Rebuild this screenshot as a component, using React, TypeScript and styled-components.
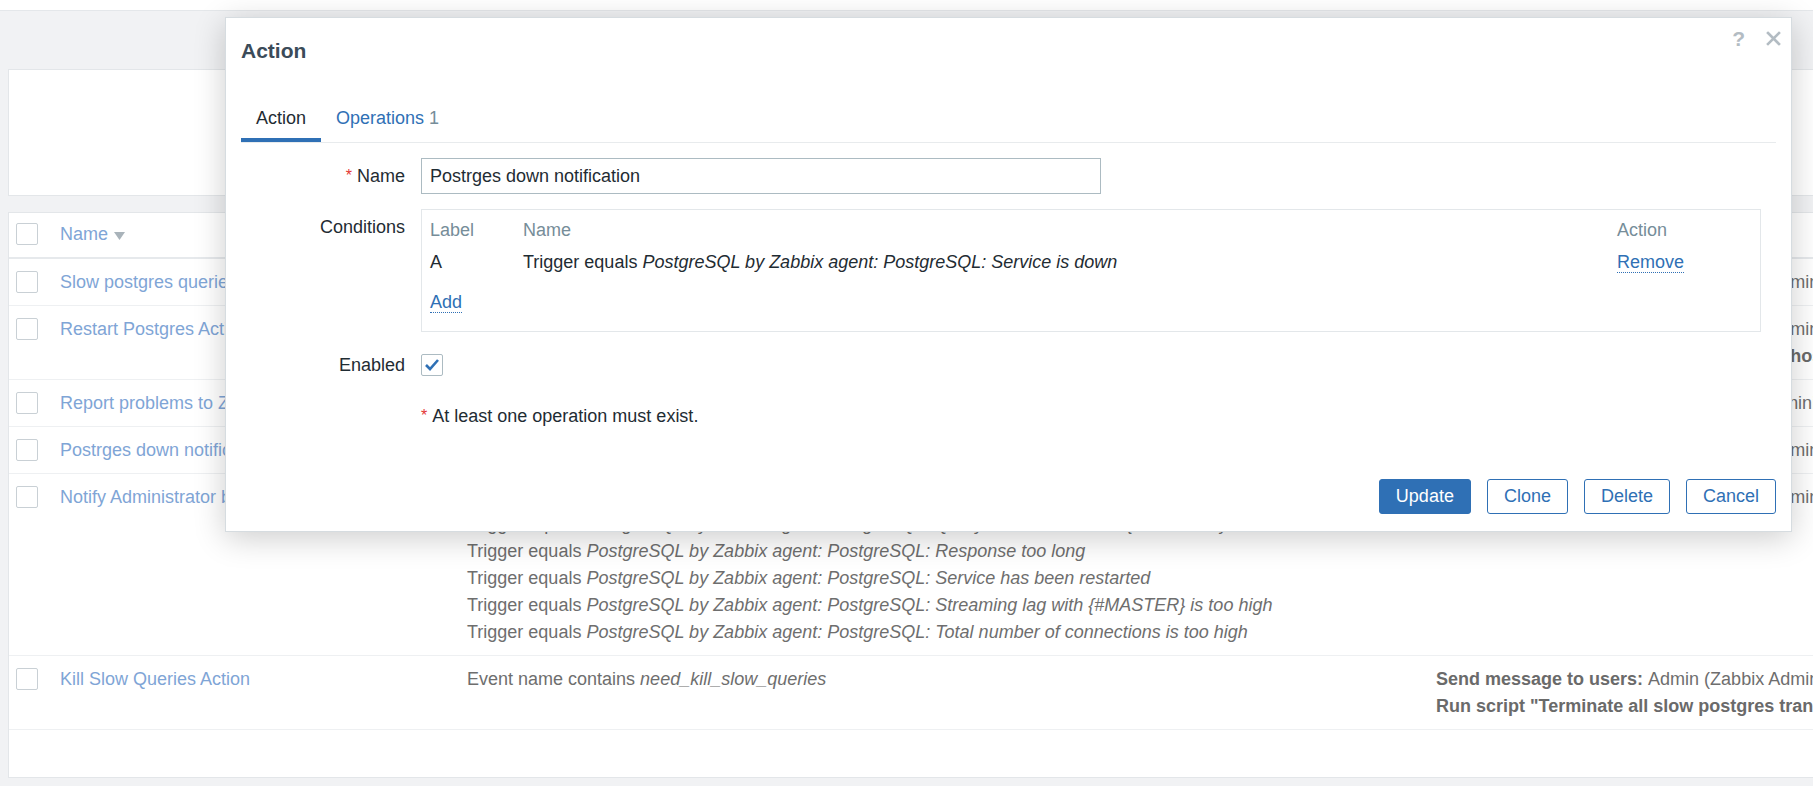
import { createGlobalStyle, styled } from "styled-components"

const GlobalStyle = createGlobalStyle`
  html, body {
    margin: 0;
    padding: 0;
  }
  body {
    width: 1813px;
    height: 786px;
    overflow: hidden;
    background: #f1f2f4;
    font-family: "Liberation Sans", Arial, sans-serif;
    font-size: 18px;
    color: #1f2c33;
  }
  * {
    box-sizing: border-box;
  }
`

const Page = styled.div`
  position: relative;
  width: 1813px;
  height: 786px;
  overflow: hidden;
`

const TopBar = styled.div`
  height: 11px;
  background: #fff;
  border-bottom: 1px solid #e4e7ea;
`

const Content = styled.div`
  padding: 58px 0 0 8px;
`

const FilterBox = styled.div`
  width: 1900px;
  height: 127px;
  background: #fff;
  border: 1px solid #e3e6e9;
`

const ListTable = styled.div`
  width: 1900px;
  margin-top: 16px;
  background: #fff;
  border: 1px solid #e3e6e9;
  color: #6e6e6e;
  line-height: 27px;
`

const Row = styled.div<{ $head?: boolean }>`
  display: grid;
  grid-template-columns: 51px 407px 969px 1fr;
  padding: ${p => (p.$head ? "8px 0 9px" : "10px 0 9px")};
  border-bottom: ${p => (p.$head ? "2px solid #e6e9ec" : "1px solid #eef0f2")};
`

const Cell = styled.div`
  white-space: nowrap;
`

const CheckCell = styled.div`
  padding-left: 7px;
`

const FadedBox = styled.div`
  width: 22px;
  height: 22px;
  margin-top: 2px;
  border: 1px solid #c9d0d5;
  border-radius: 2px;
  background: #fff;
`

const FadedLink = styled.span`
  color: #7fa5d6;
`

const SortArrow = styled.svg`
  margin-left: 6px;
  vertical-align: 0;
`

const Ops = styled.b`
  font-weight: bold;
  color: #6a6a6a;
`

const TableFooter = styled.div`
  height: 47px;
`

const Dialog = styled.div`
  position: absolute;
  left: 225px;
  top: 17px;
  width: 1567px;
  background: #fff;
  border: 1px solid #d6dce0;
  box-shadow: 0 6px 30px rgba(0, 0, 0, 0.2);
  padding: 0 15px 17px 15px;
`

const DialogHeader = styled.div`
  position: relative;
  padding-top: 20px;
`

const Title = styled.h4`
  margin: 0;
  font-size: 21px;
  line-height: 26px;
  font-weight: bold;
  color: #3b4b59;
`

const HeaderIcons = styled.div`
  position: absolute;
  top: 12px;
  right: -5px;
  display: flex;
  align-items: center;
  gap: 21px;
  height: 17px;
`

const HelpIcon = styled.span`
  font-size: 21px;
  line-height: 17px;
  font-weight: bold;
  color: #b3bcc3;
`

const TabList = styled.div`
  display: flex;
  margin-top: 41px;
  border-bottom: 1px solid #e8ebed;
`

const Tab = styled.div<{ $active?: boolean }>`
  padding: 0 15px 6px;
  line-height: 27px;
  border-bottom: 4px solid ${p => (p.$active ? "#2f70b5" : "transparent")};
  color: ${p => (p.$active ? "#1f2c33" : "#2f70b5")};
`

const TabCount = styled.span`
  color: #768d99;
  margin-left: 5px;
`

const Form = styled.div`
  display: grid;
  grid-template-columns: 180px 1fr;
  row-gap: 15px;
  margin-top: 15px;
  padding-right: 15px;
`

const Label = styled.div`
  text-align: right;
  padding-right: 16px;
  line-height: 36px;
  color: #1f2c33;
`

const Required = styled.span`
  color: #e33734;
  font-size: 16px;
  margin-right: 5px;
  vertical-align: 1px;
`

const Field = styled.div`
  min-height: 36px;
  display: flex;
  align-items: center;
`

const TextInput = styled.input`
  width: 680px;
  height: 36px;
  border: 1px solid #acbbc2;
  border-radius: 0;
  padding: 0 8px;
  font-family: inherit;
  font-size: 18px;
  color: #1f2c33;
  outline: none;
`

const ConditionsBox = styled.div`
  width: 100%;
  border: 1px solid #e3e7ea;
  padding: 7px 8px 15px;
  line-height: 27px;
`

const CondGrid = styled.div<{ $gap?: number }>`
  display: grid;
  grid-template-columns: 93px 1fr 135px;
  margin-top: ${p => p.$gap ?? 0}px;
`

const CondHead = styled.div`
  color: #768d99;
`

const DottedLink = styled.span`
  color: #2f70b5;
  border-bottom: 1px dotted #2f70b5;
`

const CheckBox = styled.span`
  display: inline-flex;
  align-items: center;
  justify-content: center;
  width: 22px;
  height: 22px;
  border: 1px solid #acbbc2;
  border-radius: 2px;
  background: #fff;
`

const Note = styled.div`
  line-height: 36px;
  color: #1f2c33;
`

const Footer = styled.div`
  display: flex;
  justify-content: flex-end;
  gap: 16px;
  margin-top: 45px;
`

const Button = styled.button<{ $primary?: boolean }>`
  height: 35px;
  padding: 0 16px;
  border-radius: 3px;
  border: 1px solid #2f70b5;
  background: ${p => (p.$primary ? "#2f70b5" : "#fff")};
  color: ${p => (p.$primary ? "#fff" : "#2f70b5")};
  font-family: inherit;
  font-size: 18px;
  cursor: pointer;
`

const trig = "PostgreSQL by Zabbix agent: PostgreSQL: "

type ActionRow = {
  name: string
  conditions: { pre: string; it: string }[]
  ops: { b: string; t?: string }[]
}

const rows: ActionRow[] = [
  {
    name: "Slow postgres queries notification",
    conditions: [{ pre: "Trigger equals ", it: trig + "Too many slow queries" }],
    ops: [{ b: "Send message to users: ", t: "Admin (Zabbix Administrator) via all media" }],
  },
  {
    name: "Restart Postgres Action",
    conditions: [{ pre: "Trigger equals ", it: trig + "Service is down" }],
    ops: [
      { b: "Send message to users: ", t: "Admin (Zabbix Administrator) via all media" },
      { b: 'Run script "Restart Postgres" on current host' },
    ],
  },
  {
    name: "Report problems to Zabbix administrators",
    conditions: [],
    ops: [{ b: "Send message to user groups: ", t: "Zabbix administrators via all media" }],
  },
  {
    name: "Postrges down notification",
    conditions: [{ pre: "Trigger equals ", it: trig + "Service is down" }],
    ops: [{ b: "Send message to users: ", t: "Admin (Zabbix Administrator) via all media" }],
  },
  {
    name: "Notify Administrator by email",
    conditions: [
      { pre: "Trigger equals ", it: trig + "Cache hit ratio too low" },
      { pre: "Trigger equals ", it: trig + "Query execution for DB {#DBNAME} is too slow" },
      { pre: "Trigger equals ", it: trig + "Response too long" },
      { pre: "Trigger equals ", it: trig + "Service has been restarted" },
      { pre: "Trigger equals ", it: trig + "Streaming lag with {#MASTER} is too high" },
      { pre: "Trigger equals ", it: trig + "Total number of connections is too high" },
    ],
    ops: [{ b: "Send message to users: ", t: "Admin (Zabbix Administrator) via all media" }],
  },
  {
    name: "Kill Slow Queries Action",
    conditions: [{ pre: "Event name contains ", it: "need_kill_slow_queries" }],
    ops: [
      { b: "Send message to users: ", t: "Admin (Zabbix Administrator) via all media" },
      { b: 'Run script "Terminate all slow postgres transactions" on current host' },
    ],
  },
]

const CloseIcon = () => (
  <svg width="15" height="15" viewBox="0 0 15 15">
    <path d="M2 2 L13 13 M13 2 L2 13" stroke="#b3bcc3" strokeWidth="2.6" strokeLinecap="square" />
  </svg>
)

const Tick = () => (
  <svg width="16" height="14" viewBox="0 0 16 14">
    <polyline points="2,7 6,11 14,2" fill="none" stroke="#2f70b5" strokeWidth="2.6" />
  </svg>
)

export default function App() {
  return (
    <Page>
      <GlobalStyle />
      <TopBar />
      <Content>
        <FilterBox />
        <ListTable>
          <Row $head>
            <CheckCell>
              <FadedBox />
            </CheckCell>
            <Cell>
              <FadedLink>Name</FadedLink>
              <SortArrow width="11" height="8" viewBox="0 0 11 8">
                <polygon points="0,0 11,0 5.5,8" fill="#a9b3ba" />
              </SortArrow>
            </Cell>
            <Cell>
              <FadedLink>Conditions</FadedLink>
            </Cell>
            <Cell>Operations</Cell>
          </Row>
          {rows.map(r => (
            <Row key={r.name}>
              <CheckCell>
                <FadedBox />
              </CheckCell>
              <Cell>
                <FadedLink>{r.name}</FadedLink>
              </Cell>
              <Cell>
                {r.conditions.map((c, i) => (
                  <div key={i}>
                    {c.pre}
                    <i>{c.it}</i>
                  </div>
                ))}
              </Cell>
              <Cell>
                {r.ops.map((o, i) => (
                  <div key={i}>
                    <Ops>{o.b}</Ops>
                    {o.t}
                  </div>
                ))}
              </Cell>
            </Row>
          ))}
          <TableFooter />
        </ListTable>
      </Content>

      <Dialog>
        <DialogHeader>
          <Title>Action</Title>
          <HeaderIcons>
            <HelpIcon>?</HelpIcon>
            <CloseIcon />
          </HeaderIcons>
        </DialogHeader>

        <TabList>
          <Tab $active>Action</Tab>
          <Tab>
            Operations<TabCount>1</TabCount>
          </Tab>
        </TabList>

        <Form>
          <Label>
            <Required>*</Required>Name
          </Label>
          <Field>
            <TextInput defaultValue="Postrges down notification" />
          </Field>

          <Label>Conditions</Label>
          <Field>
            <ConditionsBox>
              <CondGrid>
                <CondHead>Label</CondHead>
                <CondHead>Name</CondHead>
                <CondHead>Action</CondHead>
              </CondGrid>
              <CondGrid $gap={5}>
                <div>A</div>
                <div>
                  Trigger equals <i>PostgreSQL by Zabbix agent: PostgreSQL: Service is down</i>
                </div>
                <div>
                  <DottedLink>Remove</DottedLink>
                </div>
              </CondGrid>
              <CondGrid $gap={13}>
                <div>
                  <DottedLink>Add</DottedLink>
                </div>
              </CondGrid>
            </ConditionsBox>
          </Field>

          <Label>Enabled</Label>
          <Field>
            <CheckBox>
              <Tick />
            </CheckBox>
          </Field>

          <div />
          <Note>
            <Required>*</Required>At least one operation must exist.
          </Note>
        </Form>

        <Footer>
          <Button $primary>Update</Button>
          <Button>Clone</Button>
          <Button>Delete</Button>
          <Button>Cancel</Button>
        </Footer>
      </Dialog>
    </Page>
  )
}
